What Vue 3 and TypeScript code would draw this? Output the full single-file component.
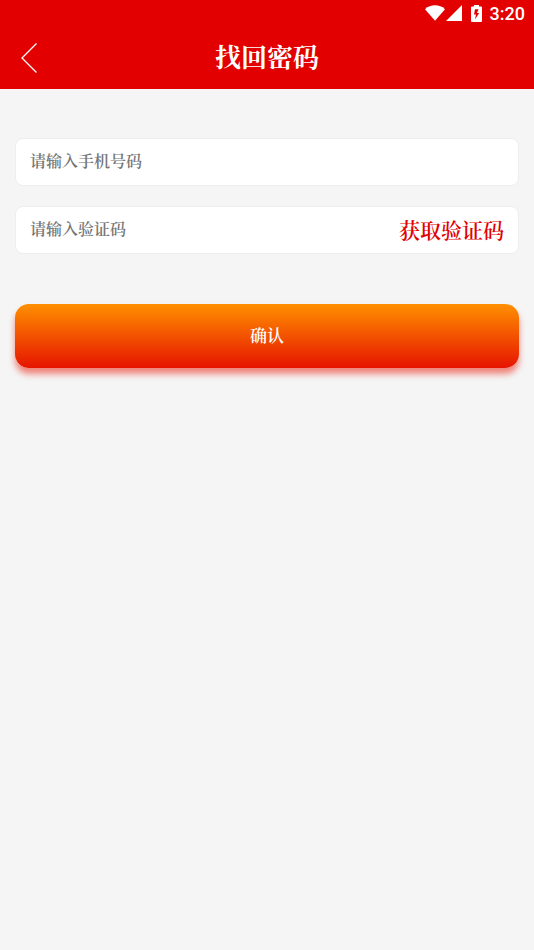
<script setup lang="ts">
import { ref } from 'vue'

const phone = ref('')
const code = ref('')
</script>

<template>
  <div class="page">
    <header class="header">
      <div class="status">
        <svg class="wifi" viewBox="0 0 20 16" aria-hidden="true">
          <path d="M0 4.2C3 1.4 6.2 0.3 10 0.3s7 1.1 10 3.9L10 15.8z" fill="#fff" />
        </svg>
        <svg class="signal" viewBox="0 0 16 16" aria-hidden="true">
          <path d="M16 0v16H0z" fill="#fff" />
        </svg>
        <svg class="battery" viewBox="0 0 11 17" aria-hidden="true">
          <path
            d="M3 0h5v1.5h2q1 0 1 1V16q0 1-1 1H1q-1 0-1-1V2.5q0-1 1-1h2zM4 4.2L3 9.5h2L4 14.5L8.2 8H6L7.6 4.2z"
            fill="#fff"
            fill-rule="evenodd"
          />
        </svg>
        <span class="time">3:20</span>
      </div>
      <div class="bar">
        <button class="back" type="button" aria-label="返回">
          <svg viewBox="0 0 18 32" aria-hidden="true">
            <path d="M16.5 1.5L2 16l14.5 14.5" fill="none" stroke="#fff" stroke-width="1.3" />
          </svg>
        </button>
        <h1 class="title">找回密码</h1>
      </div>
    </header>
    <form class="form" @submit.prevent>
      <div class="field">
        <input v-model="phone" type="tel" placeholder="请输入手机号码" aria-label="请输入手机号码" />
      </div>
      <div class="field">
        <input v-model="code" type="text" placeholder="请输入验证码" aria-label="请输入验证码" />
        <button class="get-code" type="button">获取验证码</button>
      </div>
      <button class="submit" type="submit">确认</button>
    </form>
  </div>
</template>

<style>
body {
  background: #f5f5f5;
}
</style>

<style scoped>
.page {
  min-height: 100vh;
  background: #f5f5f5;
  font-family: "Noto Serif CJK SC", "Noto Serif SC", serif;
}
.page * {
  box-sizing: border-box;
}
button,
input {
  margin: 0;
  padding: 0;
  border: 0;
  background: none;
  font-family: inherit;
}
.header {
  background: #e30000;
  color: #fff;
}
.status {
  display: flex;
  align-items: center;
  justify-content: flex-end;
  height: 26px;
  padding-right: 9px;
}
.wifi {
  width: 20px;
  height: 16px;
}
.signal {
  width: 16px;
  height: 16px;
  margin: 0 9px 0 1px;
}
.battery {
  width: 11px;
  height: 17px;
  margin-right: 8px;
}
.time {
  padding-top: 2px;
  font: 500 18px/26px Roboto, sans-serif;
}
.bar {
  display: grid;
  grid-template-columns: 40px 1fr 40px;
  align-items: center;
  height: 63px;
}
.back {
  display: flex;
  justify-content: flex-end;
  padding-right: 2px;
}
.back svg {
  width: 18px;
  height: 32px;
}
.title {
  margin: 0;
  padding-bottom: 4px;
  font-size: 26px;
  line-height: 36px;
  font-weight: 700;
  text-align: center;
}
.form {
  padding: 49px 15px 0;
}
.field {
  display: flex;
  align-items: center;
  height: 48px;
  margin-bottom: 20px;
  padding: 0 14px;
  border: 1px solid #eee;
  border-radius: 8px;
  background: #fff;
}
.field input {
  flex: 1;
  min-width: 0;
  height: 44px;
  padding-bottom: 4px;
  outline: none;
  color: #333;
  font-size: 16px;
  font-weight: 600;
}
.field input::placeholder {
  color: #757575;
}
.get-code {
  padding-bottom: 2px;
  color: #e30000;
  font-size: 21px;
  font-weight: 600;
}
.submit {
  display: block;
  width: 100%;
  height: 64px;
  margin-top: 50px;
  padding-bottom: 4px;
  border-radius: 14px;
  background: linear-gradient(#ff9000, #e61400);
  box-shadow: 0 6px 6px rgba(234, 20, 0, 0.5);
  color: #fff;
  font-size: 17px;
  font-weight: 600;
}
</style>
